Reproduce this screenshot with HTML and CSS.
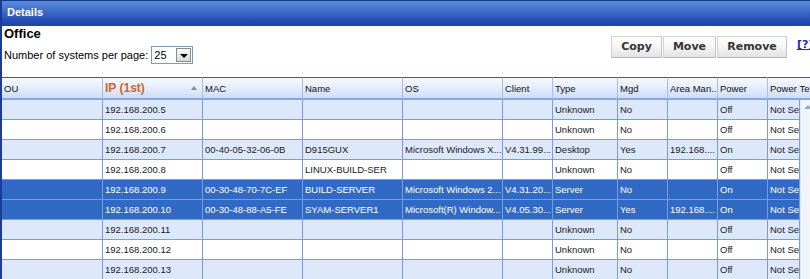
FILE: index.html
```html
<!DOCTYPE html>
<html>
<head>
<meta charset="utf-8">
<title>Details</title>
<link rel="stylesheet" href="styles.css">
</head>
<body>
<div class="panel">
  <div class="titlebar">Details</div>
  <div class="toolbar">
    <div class="tb-left">
      <div class="heading">Office</div>
      <div class="perpage">
        <span class="perpage-label">Number of systems per page:</span>
        <div class="select"><span class="sel-val">25</span><span class="sel-btn"><span class="sel-arrow"></span></span></div>
      </div>
    </div>
    <div class="tb-right">
      <button class="btn btn-copy">Copy</button>
      <button class="btn btn-move">Move</button>
      <button class="btn btn-remove">Remove</button>
      <a class="help" href="#">[?]</a>
    </div>
  </div>

  <table class="grid grid-head">
    <colgroup>
      <col class="c-ou"><col class="c-100"><col class="c-100"><col class="c-100"><col class="c-100">
      <col class="c-50"><col class="c-65"><col class="c-50"><col class="c-50"><col class="c-50"><col class="c-lasth">
    </colgroup>
    <tr>
      <th>OU</th>
      <th class="sorted"><div class="sorted-in"><span>IP (1st)</span><span class="sort-up"></span></div></th>
      <th>MAC</th>
      <th>Name</th>
      <th>OS</th>
      <th>Client</th>
      <th>Type</th>
      <th>Mgd</th>
      <th>Area Man...</th>
      <th>Power</th>
      <th>Power Term</th>
    </tr>
  </table>

  <div class="grid-body">
    <table class="grid grid-rows">
      <colgroup>
        <col class="c-ou"><col class="c-100"><col class="c-100"><col class="c-100"><col class="c-100">
        <col class="c-50"><col class="c-65"><col class="c-50"><col class="c-50"><col class="c-50"><col class="c-lastb">
      </colgroup>
      <tr class="alt"><td></td><td>192.168.200.5</td><td></td><td></td><td></td><td></td><td>Unknown</td><td>No</td><td></td><td>Off</td><td>Not Set</td></tr>
      <tr><td></td><td>192.168.200.6</td><td></td><td></td><td></td><td></td><td>Unknown</td><td>No</td><td></td><td>Off</td><td>Not Set</td></tr>
      <tr class="alt"><td></td><td>192.168.200.7</td><td>00-40-05-32-06-0B</td><td>D915GUX</td><td>Microsoft Windows X...</td><td>V4.31.99...</td><td>Desktop</td><td>Yes</td><td>192.168....</td><td>On</td><td>Not Set</td></tr>
      <tr><td></td><td>192.168.200.8</td><td></td><td>LINUX-BUILD-SER</td><td></td><td></td><td>Unknown</td><td>No</td><td></td><td>Off</td><td>Not Set</td></tr>
      <tr class="sel"><td></td><td>192.168.200.9</td><td>00-30-48-70-7C-EF</td><td>BUILD-SERVER</td><td>Microsoft Windows 2...</td><td>V4.31.20...</td><td>Server</td><td>No</td><td></td><td>On</td><td>Not Set</td></tr>
      <tr class="sel"><td></td><td>192.168.200.10</td><td>00-30-48-88-A5-FE</td><td>SYAM-SERVER1</td><td>Microsoft(R) Window...</td><td>V4.05.30...</td><td>Server</td><td>Yes</td><td>192.168....</td><td>On</td><td>Not Set</td></tr>
      <tr class="alt"><td></td><td>192.168.200.11</td><td></td><td></td><td></td><td></td><td>Unknown</td><td>No</td><td></td><td>Off</td><td>Not Set</td></tr>
      <tr><td></td><td>192.168.200.12</td><td></td><td></td><td></td><td></td><td>Unknown</td><td>No</td><td></td><td>Off</td><td>Not Set</td></tr>
      <tr class="alt"><td></td><td>192.168.200.13</td><td></td><td></td><td></td><td></td><td>Unknown</td><td>No</td><td></td><td>Off</td><td>Not Set</td></tr>
    </table>
    <div class="vscroll"><div class="vs-up"><span class="vs-arrow"></span></div></div>
  </div>
</div>
</body>
</html>
```

FILE: styles.css
```css
html, body {
  margin: 0;
  padding: 0;
  background: #ffffff;
  overflow: hidden;
}
body {
  font-family: "Liberation Sans", Arial, sans-serif;
  color: #000;
}
.panel {
  width: 828px;
  border-left: 2px solid #1c3b9b;
  min-height: 300px;
}
.titlebar {
  height: 25px;
  border-top: 1px solid #15368f;
  background: linear-gradient(#5d8bda 0%, #3e6dca 40%, #2551b4 75%, #1b43a4 100%);
  color: #ffffff;
  font-weight: bold;
  font-size: 11px;
  line-height: 22px;
  padding-left: 5px;
}
.toolbar {
  height: 51px;
  display: flex;
  padding-left: 2px;
  padding-right: 13px;
}
.tb-left {
  flex: 1;
}
.heading {
  font-weight: bold;
  font-size: 13px;
  line-height: 16px;
  height: 16px;
}
.perpage {
  margin-top: 4px;
  display: flex;
  align-items: center;
  height: 18px;
  font-size: 11px;
}
.perpage-label {
  margin-right: 3px;
}
.select {
  width: 42px;
  height: 18px;
  box-sizing: border-box;
  border: 1px solid #7f9db9;
  display: flex;
  align-items: center;
  justify-content: space-between;
  padding: 0 1px 0 2px;
  font-size: 11px;
}
.sel-btn {
  width: 15px;
  height: 14px;
  box-sizing: border-box;
  border: 1px solid #8c8c8c;
  background: linear-gradient(#fafafa, #d9d9d9);
  display: flex;
  align-items: center;
  justify-content: center;
}
.sel-arrow {
  width: 0;
  height: 0;
  border-left: 4px solid transparent;
  border-right: 4px solid transparent;
  border-top: 4px solid #000;
  margin-top: 1px;
}
.tb-right {
  display: flex;
  align-items: flex-start;
  padding-top: 10px;
  gap: 1px;
}
.btn {
  height: 22px;
  box-sizing: border-box;
  padding: 0;
  margin: 0;
  border: 1px solid #d2d2d2;
  border-bottom-color: #b9b9b9;
  border-right-color: #c4c4c4;
  background: linear-gradient(#ffffff 0%, #f6f6f6 45%, #e3e3e3 100%);
  color: #353535;
  font-family: "DejaVu Sans", Verdana, sans-serif;
  font-weight: bold;
  font-size: 11px;
  line-height: 20px;
  text-align: center;
}
.btn-copy { width: 51px; }
.btn-move { width: 53px; }
.btn-remove { width: 70px; }
.help {
  width: 20px;
  margin-left: 9px;
  margin-top: 2px;
  font-family: "DejaVu Sans", Verdana, sans-serif;
  font-weight: bold;
  font-size: 11px;
  line-height: 13px;
  color: #2424b8;
  text-decoration: underline;
  white-space: nowrap;
}

.grid {
  table-layout: fixed;
  border-collapse: separate;
  border-spacing: 0;
  font-size: 9.5px;
}
.c-ou { width: 101px; }
.c-100 { width: 100px; }
.c-50 { width: 50px; }
.c-65 { width: 65px; }
.c-lasth { width: 62px; }
.c-lastb { width: 32px; }

.grid-head {
  width: 828px;
}
.grid-head th {
  height: 20px;
  box-sizing: border-box;
  padding: 0 2px;
  text-align: left;
  font-weight: normal;
  white-space: nowrap;
  overflow: hidden;
  background: linear-gradient(#f7f9fe 0%, #e6eefb 45%, #cddcf6 100%);
  border-top: 1px solid #3557b5;
  border-right: 1px solid #a7bdea;
  border-bottom: 2px solid #87a6e2;
  height: 23px;
  color: #111;
}
.sorted-in {
  display: flex;
  align-items: center;
  justify-content: space-between;
}
.sorted span:first-child {
  font-weight: bold;
  font-size: 12px;
  color: #d2642e;
}
.sort-up {
  width: 0;
  height: 0;
  border-left: 3px solid transparent;
  border-right: 3px solid transparent;
  border-bottom: 4px solid #8a8a8a;
  margin-right: 3px;
}

.grid-body {
  display: flex;
  align-items: flex-start;
}
.grid-rows {
  width: 798px;
  flex-shrink: 0;
}
.grid-rows td {
  height: 20px;
  box-sizing: border-box;
  padding: 0 2px;
  white-space: nowrap;
  overflow: hidden;
  border-right: 1px solid #7a9cdf;
  border-bottom: 1px solid #7a9cdf;
  color: #1a1a1a;
  background: #ffffff;
}
.grid-rows tr.alt td {
  background: #dee8fb;
}
.grid-rows tr.sel td {
  background: #316ac5;
  color: #ffffff;
}
.vscroll {
  width: 17px;
  height: 180px;
  flex-shrink: 0;
  background: #f2f5fc;
  border-left: 1px solid #dde5f6;
}
.vs-up {
  height: 14px;
  display: flex;
  align-items: center;
  justify-content: center;
}
.vs-arrow {
  width: 0;
  height: 0;
  border-left: 4px solid transparent;
  border-right: 4px solid transparent;
  border-bottom: 4px solid #8fa6d0;
  margin-right: 3px;
}
```
